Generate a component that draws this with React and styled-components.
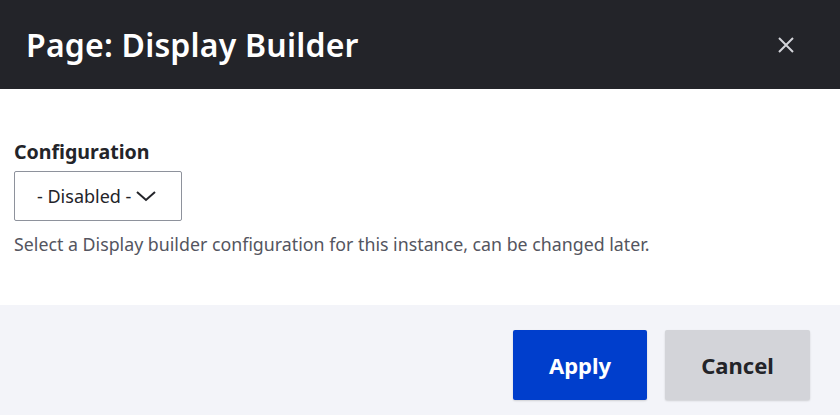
import React from 'react';
import styled, { createGlobalStyle } from 'styled-components';

const GlobalStyle = createGlobalStyle`
  html, body {
    margin: 0;
    padding: 0;
    background: #ffffff;
    font-family: "Noto Sans", "Open Sans", sans-serif;
  }
`;

/* Styles */
const Dialog = styled.div`
  display: flex;
  flex-direction: column;
  width: 840px;
  height: 415px;
  overflow: hidden;
`;

const Header = styled.header`
  display: flex;
  align-items: center;
  justify-content: space-between;
  height: 89px;
  padding: 0 46px 0 26px;
  box-sizing: border-box;
  background: #232429;
`;

const Title = styled.h1`
  margin: 0;
  font-size: 32px;
  font-weight: 600;
  color: #ffffff;
  letter-spacing: 0.2px;
`;

const CloseButton = styled.button`
  display: flex;
  align-items: center;
  justify-content: center;
  padding: 0;
  border: none;
  background: transparent;
  cursor: pointer;
`;

const Body = styled.div`
  display: flex;
  flex-direction: column;
  height: 216px;
  padding: 50px 14px 0;
  box-sizing: border-box;
`;

const Label = styled.label`
  font-size: 19.6px;
  font-weight: 700;
  color: #232429;
  line-height: 26px;
  margin-bottom: 6px;
`;

const Select = styled.div`
  display: flex;
  align-items: center;
  gap: 4px;
  width: 168px;
  height: 50px;
  box-sizing: border-box;
  padding: 0 22px;
  border: 1px solid #8e929c;
  border-radius: 2px;
  font-size: 18px;
  color: #232429;
`;

const Description = styled.p`
  margin: 11px 0 0;
  font-size: 17.8px;
  color: #545560;
`;

const Footer = styled.footer`
  display: flex;
  justify-content: flex-end;
  align-items: flex-start;
  gap: 18px;
  flex: 1;
  padding: 25px 30px 0 0;
  background: #f3f4f9;
`;

const Button = styled.button`
  height: 70px;
  width: ${p => p.width}px;
  border: none;
  border-radius: 2px;
  font-family: inherit;
  font-size: 22px;
  font-weight: 700;
  cursor: pointer;
  color: ${p => (p.primary ? '#ffffff' : '#232429')};
  background: ${p => (p.primary ? '#003ecc' : '#d3d4d9')};
  box-shadow: 0 1px 2px rgba(0, 0, 0, 0.15);
`;

/* Component */
const App = () => (
  <>
    <GlobalStyle />
    <Dialog>
      <Header>
        <Title>Page: Display Builder</Title>
        <CloseButton aria-label='Close'>
          <svg width='16' height='16' viewBox='0 0 16 16'>
            <path d='M1 1 L15 15 M15 1 L1 15' stroke='#d3d4d9' strokeWidth='2' />
          </svg>
        </CloseButton>
      </Header>
      <Body>
        <Label>Configuration</Label>
        <Select>
          <span>- Disabled -</span>
          <svg width='22' height='14' viewBox='0 0 22 14'>
            <path d='M2 3 L11 11 L20 3' fill='none' stroke='#232429' strokeWidth='2' />
          </svg>
        </Select>
        <Description>
          Select a Display builder configuration for this instance, can be changed later.
        </Description>
      </Body>
      <Footer>
        <Button primary width={134}>Apply</Button>
        <Button width={145}>Cancel</Button>
      </Footer>
    </Dialog>
  </>
);

export default App;
